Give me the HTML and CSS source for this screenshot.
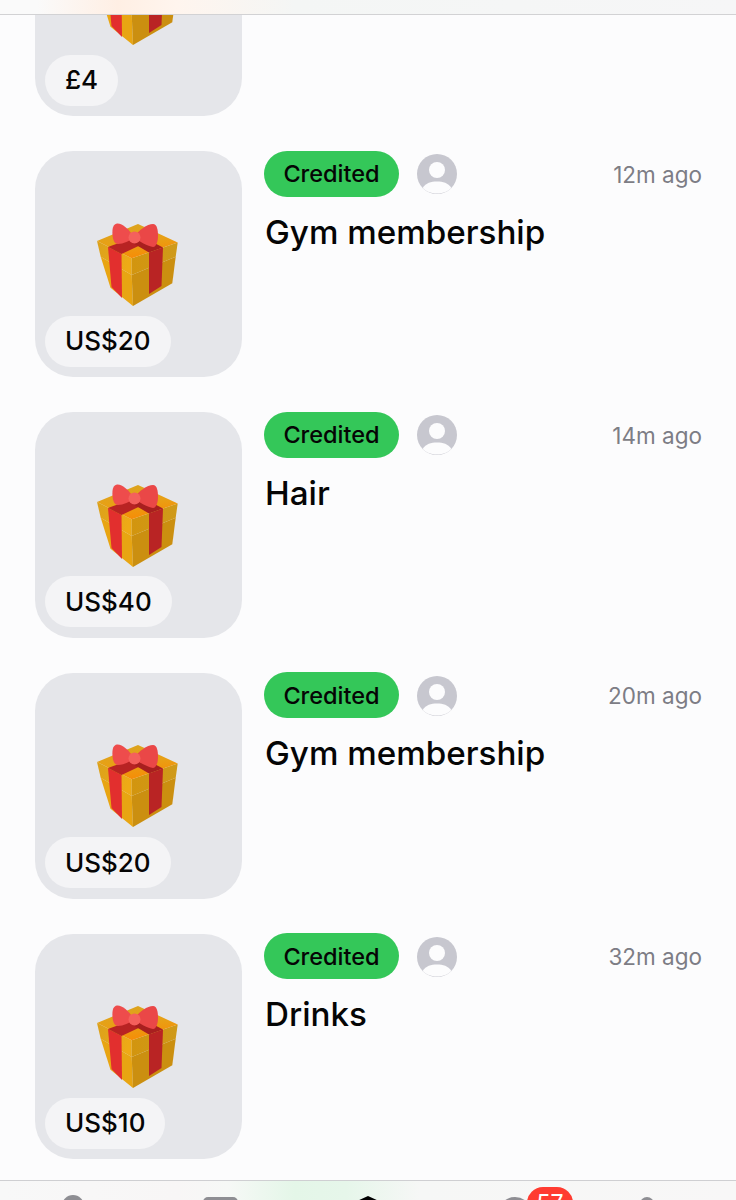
FILE: index.html
```html
<!DOCTYPE html>
<html lang="en">
<head>
<meta charset="utf-8">
<title>Gifts</title>
<link rel="stylesheet" href="styles.css">
</head>
<body>
<svg class="defs" width="0" height="0" aria-hidden="true">
  <defs>
    <linearGradient id="g-top" x1="0" y1="0" x2="0.3" y2="1"><stop offset="0" stop-color="#d9a521"/><stop offset="0.6" stop-color="#e8a015"/><stop offset="1" stop-color="#f58e08"/></linearGradient>
    <linearGradient id="g-lid-l" x1="0" y1="0" x2="1" y2="0.3"><stop offset="0" stop-color="#dba11c"/><stop offset="1" stop-color="#eeaa16"/></linearGradient>
    <linearGradient id="g-lid-r" x1="0" y1="0" x2="1" y2="0"><stop offset="0" stop-color="#d2950f"/><stop offset="1" stop-color="#cf9a1a"/></linearGradient>
    <symbol id="gift" viewBox="0 0 105 100">
      <polygon points="15.7,41.7 46.7,60 48,91 25.5,72.7" fill="#e8a512"/>
      <polygon points="46.7,60 90.7,41.7 87.3,68.3 48,91" fill="#cb8f10"/>
      <polygon points="12,26 46.7,43.3 46.7,60 15.7,41.7" fill="url(#g-lid-l)"/>
      <polygon points="46.7,43.3 92.7,27.5 90.7,41.7 46.7,60" fill="url(#g-lid-r)"/>
      <polygon points="12,26 53,9 92.7,27.5 46.7,43.3" fill="url(#g-top)"/>
      <polygon points="23,32 36.5,39 37,83 26.5,72" fill="#e22f2e"/>
      <polygon points="64,37.5 78,32.5 76.5,71 64,79" fill="#b92424"/>
      <polygon points="23,32 36.5,39 62,27 50,22" fill="#b82323"/>
      <polygon points="64,37.5 78,32.5 58,22 46,27" fill="#a81f1f"/>
      <path d="M49 22C44 14 37 8 32 8.500C28 9 27 14 27.500 20C28 26 30 29 33 29C38 29 45 26 49 22Z" fill="#ee4c4c"/>
      <path d="M49 22C54 15 62 9 68 9C72 9 73 15 73 21C73 27 71 32 68 32C63 31 54 27 49 22Z" fill="#ea4747"/>
      <circle cx="49.500" cy="22.500" r="6" fill="#f4605c"/>
    </symbol>
    <symbol id="avatar" viewBox="0 0 40 40">
      <circle cx="20" cy="20" r="20" fill="#c7c7cf"/>
      <circle cx="20" cy="16" r="8" fill="#fcfcfd"/>
      <path d="M5.6 33.9C9 29 14 27.5 20 27.5C26 27.5 31 29 34.4 33.9C30.5 37.8 25 39.5 20 39.5C15 39.5 9.5 37.8 5.6 33.9Z" fill="#fcfcfd"/>
    </symbol>
  </defs>
</svg>

<header class="topbar"></header>

<main class="viewport">
  <ul class="feed">
    <li class="row">
      <div class="thumb">
        <svg class="gift"><use href="#gift"/></svg>
        <span class="price">£4</span>
      </div>
      <div class="info"></div>
    </li>
    <li class="row">
      <div class="thumb">
        <svg class="gift"><use href="#gift"/></svg>
        <span class="price">US$20</span>
      </div>
      <div class="info">
        <div class="meta">
          <span class="status">Credited</span>
          <svg class="avatar"><use href="#avatar"/></svg>
          <span class="time">12m ago</span>
        </div>
        <h2 class="title">Gym membership</h2>
      </div>
    </li>
    <li class="row">
      <div class="thumb">
        <svg class="gift"><use href="#gift"/></svg>
        <span class="price">US$40</span>
      </div>
      <div class="info">
        <div class="meta">
          <span class="status">Credited</span>
          <svg class="avatar"><use href="#avatar"/></svg>
          <span class="time">14m ago</span>
        </div>
        <h2 class="title">Hair</h2>
      </div>
    </li>
    <li class="row">
      <div class="thumb">
        <svg class="gift"><use href="#gift"/></svg>
        <span class="price">US$20</span>
      </div>
      <div class="info">
        <div class="meta">
          <span class="status">Credited</span>
          <svg class="avatar"><use href="#avatar"/></svg>
          <span class="time">20m ago</span>
        </div>
        <h2 class="title">Gym membership</h2>
      </div>
    </li>
    <li class="row">
      <div class="thumb">
        <svg class="gift"><use href="#gift"/></svg>
        <span class="price">US$10</span>
      </div>
      <div class="info">
        <div class="meta">
          <span class="status">Credited</span>
          <svg class="avatar"><use href="#avatar"/></svg>
          <span class="time">32m ago</span>
        </div>
        <h2 class="title">Drinks</h2>
      </div>
    </li>
  </ul>
</main>

<nav class="tabbar">
  <span class="tab tab-home"></span>
  <span class="tab tab-card"></span>
  <span class="tab tab-main"></span>
  <span class="tab tab-chat"><span class="badge">57</span></span>
  <span class="tab tab-me"></span>
</nav>
</body>
</html>
```
FILE: styles.css
```css
* { box-sizing: border-box; }
html, body { margin: 0; padding: 0; }
body {
  width: 736px;
  height: 1200px;
  overflow: hidden;
  display: flex;
  flex-direction: column;
  background: #fcfcfd;
  color: #050505;
  font-family: Inter, "Liberation Sans", sans-serif;
}
.defs { position: absolute; }
.topbar {
  flex: 0 0 15px;
  background: linear-gradient(90deg, #fafafa 5%, #ffefe4 16%, #fff5ee 24%, #f4f6f5 40%, #f6f6f7 100%);
  border-bottom: 1px solid #d2d2d4;
}
.viewport { flex: 1; overflow: hidden; }
.feed {
  list-style: none;
  margin: -125px 0 0;
  padding: 0 34px 0 34.500px;
  display: flex;
  flex-direction: column;
  gap: 34.500px;
}
.row { display: flex; gap: 22.500px; height: 226.250px; }
.thumb {
  position: relative;
  flex: 0 0 207px;
  margin-top: 0.500px;
  background: #e5e6ea;
  border-radius: 38px;
}
.gift { position: absolute; left: 50.500px; top: 63.500px; width: 105px; height: 100px; }
.price {
  position: absolute;
  left: 10.500px;
  bottom: 10.500px;
  height: 51px;
  padding: 0 20px 1px;
  display: flex;
  align-items: center;
  background: #f4f4f6;
  border-radius: 25.500px;
  font-size: 26px;
  font-weight: 550;
}
.info { flex: 1; min-width: 0; }
.meta { display: flex; align-items: center; height: 46px; }
.status {
  height: 46px;
  width: 135px;
  display: flex;
  align-items: center;
  justify-content: center;
  background: #34c759;
  border-radius: 23px;
  font-size: 23.500px;
  font-weight: 550;
}
.avatar { width: 40px; height: 40px; margin: 1px 0 0 18px; }
.time { margin-left: auto; padding-top: 1px; font-size: 22.500px; color: #7d7d85; }
.title {
  margin: 13px 0 0 1px;
  font-size: 33.200px;
  line-height: 44px;
  font-weight: 550;
}
.tabbar {
  position: relative;
  flex: 0 0 20px;
  background: linear-gradient(90deg, #f8f8f8 0, #f8f6f6 24%, #f6f8f6 31%, #e4f6e8 40%, #e6f6ea 47%, #f6f7f6 57%, #f8f7f7 100%);
  border-top: 1px solid #cfcfd2;
}
.tab { position: absolute; display: block; }
.tab-home { left: 62px; top: 14px; width: 22px; height: 22px; background: #8e8e93; border-radius: 11px 11px 0 0; }
.tab-card { left: 203px; top: 16px; width: 35px; height: 22px; background: #8e8e93; border-radius: 5px; }
.tab-main { left: 356px; top: 15px; width: 24px; height: 22px; background: #000; clip-path: polygon(50% 0, 100% 25%, 100% 100%, 0 100%, 0 25%); }
.tab-chat { left: 499px; top: 16px; width: 32px; height: 30px; background: #8e8e93; border-radius: 50%; }
.tab-me { left: 640px; top: 16px; width: 14px; height: 14px; background: #8e8e93; border-radius: 50%; }
.badge {
  position: absolute;
  left: 28px;
  top: -10px;
  width: 46px;
  height: 32px;
  background: #ff3b30;
  border-radius: 16px;
  color: #fff;
  font-size: 23px;
  line-height: 32px;
  text-align: center;
}
```
